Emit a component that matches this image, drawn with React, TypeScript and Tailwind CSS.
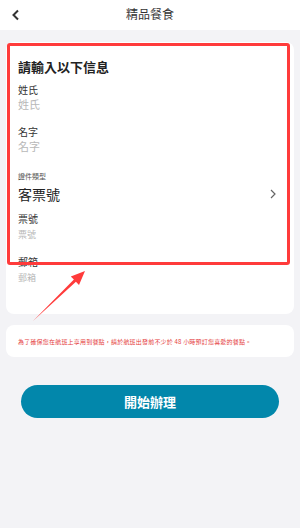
const font = { fontFamily: '"Noto Sans CJK TC", "Noto Sans", sans-serif' };

function Field({ label, placeholder, small }: { label: string; placeholder: string; small?: boolean }) {
  return (
    <div>
      <p className="text-[10px] leading-[14px] text-[#333]">{label}</p>
      <p
        className={
          small
            ? "mt-[3px] text-[9px] leading-[12px] text-[#b8b8b8]"
            : "mt-0 text-[11px] leading-[14px] text-[#b8b8b8]"
        }
      >
        {placeholder}
      </p>
    </div>
  );
}

export default function App() {
  return (
    <div className="relative w-[300px] h-[528px] bg-[#f3f3f6] overflow-hidden" style={font}>
      <header className="h-[30px] bg-white flex items-center justify-center relative">
        <svg
          className="absolute left-[11px] top-[9px]"
          width="10"
          height="12"
          viewBox="0 0 10 12"
          fill="none"
          stroke="#333"
          strokeWidth="2"
        >
          <path d="M7 1.5 L2.5 6 L7 10.5" />
        </svg>
        <h1 className="text-[12px] text-[#333] -mt-[3px]">精品餐食</h1>
      </header>

      <main className="px-[6px] pt-[12px]">
        <section className="bg-white rounded-[8px] h-[272px] px-[12px] pt-[16px]">
          <h2 className="text-[13px] leading-[18px] font-bold text-[#222]">請輸入以下信息</h2>
          <div className="mt-[7px]">
            <Field label="姓氏" placeholder="姓氏" />
          </div>
          <div className="mt-[14px]">
            <Field label="名字" placeholder="名字" />
          </div>
          <div className="mt-[18px] flex items-end justify-between pr-[6px]">
            <div>
              <p className="text-[7px] leading-[10px] text-[#555]">證件類型</p>
              <p className="mt-[3px] text-[14px] leading-[20px] text-[#222]">客票號</p>
            </div>
            <svg width="6" height="10" viewBox="0 0 6 10" fill="none" stroke="#666" strokeWidth="1.2" className="mb-[5px]">
              <path d="M1 1 L5 5 L1 9" />
            </svg>
          </div>
          <div className="mt-[8px]">
            <Field label="票號" placeholder="票號" small />
          </div>
          <div className="mt-[14px]">
            <Field label="郵箱" placeholder="郵箱" small />
          </div>
        </section>

        <section className="mt-[11px] bg-white rounded-[8px] h-[32px] px-[12px] flex items-center">
          <p className="text-[6px] leading-[8px] tracking-[0.2px] text-[#e53d3d] whitespace-nowrap mt-[2px]">
            為了確保您在航班上享用到餐點，請於航班出發前不少於 48 小時預訂您喜愛的餐點。
          </p>
        </section>

        <div className="mt-[28px] px-[15px]">
          <button className="w-full h-[33px] rounded-full bg-[#0287ab] text-white text-[13px] font-bold">
            開始辦理
          </button>
        </div>
      </main>

      <div className="absolute left-[7px] top-[43px] w-[283px] h-[222px] border-[3px] border-[#ff3b3b] rounded-[3px] pointer-events-none" />

      <svg className="absolute left-0 top-0 pointer-events-none" width="300" height="528" viewBox="0 0 300 528">
        <polygon points="33,321 73.9,279.6 70.8,276.4 85,271 79,285 75.9,281.8" fill="#ff3b3b" />
      </svg>
    </div>
  );
}
